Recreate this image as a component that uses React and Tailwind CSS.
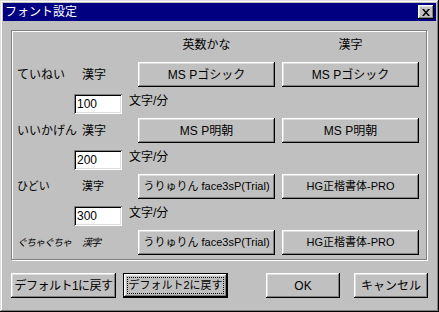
import React from "react";

const raised =
  "bg-[#c0c0c0] shadow-[inset_-1px_-1px_#000,inset_1px_1px_#fff,inset_-2px_-2px_#808080,inset_2px_2px_#dfdfdf]";
const sunken =
  "bg-white shadow-[inset_1px_1px_#808080,inset_-1px_-1px_#fff,inset_2px_2px_#000,inset_-2px_-2px_#dfdfdf]";

const rows = [
  { a: "ていねい", b: "漢字", f1: "MS Pゴシック", f2: "MS Pゴシック", speed: "100", style: "text-[12px]", fs: "text-[12px]" },
  { a: "いいかげん", b: "漢字", f1: "MS P明朝", f2: "MS P明朝", speed: "200", style: "text-[12px]", fs: "text-[12px]" },
  { a: "ひどい", b: "漢字", f1: "うりゅりん face3sP(Trial)", f2: "HG正楷書体-PRO", speed: "300", style: "text-[11px]", fs: "text-[11px]" },
  { a: "ぐちゃぐちゃ", b: "漢字", f1: "うりゅりん face3sP(Trial)", f2: "HG正楷書体-PRO", speed: null, style: "text-[10px] italic tracking-[-1px]", fs: "text-[11px]" },
];

function Btn({ children, className = "", size = "text-[12px]" }) {
  return (
    <div className={`${raised} flex items-center justify-center whitespace-nowrap text-black ${size} ${className}`}>
      {children}
    </div>
  );
}

export default function App() {
  return (
    <div className="w-[439px] h-[312px] bg-[#c0c0c0] p-[3px] flex flex-col font-['Liberation_Sans','Noto_Sans_CJK_JP',sans-serif] text-black shadow-[inset_-1px_-1px_#000,inset_1px_1px_#dfdfdf,inset_-2px_-2px_#808080,inset_2px_2px_#fff]">
      {/* title bar */}
      <div className="h-[18px] bg-[#000080] flex items-center justify-between pl-[2px] pr-[2px]">
        <span className="text-white text-[12px] leading-none">フォント設定</span>
        <div className={`${raised} w-[16px] h-[14px] flex items-center justify-center`}>
          <svg width="8" height="7" viewBox="0 0 8 7">
            <path d="M0 0h2l2 2.5 2-2.5h2l-3 3.5 3 3.5h-2l-2-2.5-2 2.5h-2l3-3.5z" fill="#000" />
          </svg>
        </div>
      </div>

      {/* group box */}
      <div className="ml-[8px] mt-[9px] w-[416px] h-[230px] border border-[#808080] shadow-[inset_1px_1px_#fff,1px_1px_#fff] flex flex-col">
        <div className="mt-[8px] pl-[126px] flex gap-[7px] h-[12px] text-[12px] leading-[12px]">
          <span className="w-[137px] text-center">英数かな</span>
          <span className="w-[137px] text-center">漢字</span>
        </div>

        {rows.map((r, i) => (
          <div key={i} className={i === 0 ? "mt-[11px]" : "mt-[4px]"}>
            <div className="flex items-center h-[25px] pl-[5px]">
              <span className={`w-[65px] whitespace-nowrap ${r.style}`}>{r.a}</span>
              <span className={`w-[56px] whitespace-nowrap ${r.style}`}>{r.b}</span>
              <Btn className="w-[137px] h-[25px]" size={r.fs}>{r.f1}</Btn>
              <Btn className="ml-[7px] w-[137px] h-[25px]" size={r.fs}>{r.f2}</Btn>
            </div>
            {r.speed && (
              <div className="mt-[7px] flex h-[20px] pl-[62px]">
                <div className={`${sunken} w-[48px] h-[20px] pl-[3px] text-[12px] leading-[20px]`}>{r.speed}</div>
                <span className="ml-[7px] text-[12px] leading-[14px]">文字/分</span>
              </div>
            )}
          </div>
        ))}
      </div>

      {/* bottom buttons */}
      <div className="mt-[13px] ml-[8px] flex">
        <Btn className="w-[105px] h-[25px] tracking-[-0.5px]">デフォルト1に戻す</Btn>
        <div className="ml-[7px] w-[105px] h-[25px] border border-black">
          <div className={`${raised} w-full h-full p-[3px]`}>
            <div className="w-full h-full border border-dotted border-black flex items-center justify-center whitespace-nowrap text-[11px]">
              デフォルト2に戻す
            </div>
          </div>
        </div>
        <Btn className="ml-[38px] w-[74px] h-[25px]">OK</Btn>
        <Btn className="ml-[14px] w-[74px] h-[25px]">キャンセル</Btn>
      </div>
    </div>
  );
}
